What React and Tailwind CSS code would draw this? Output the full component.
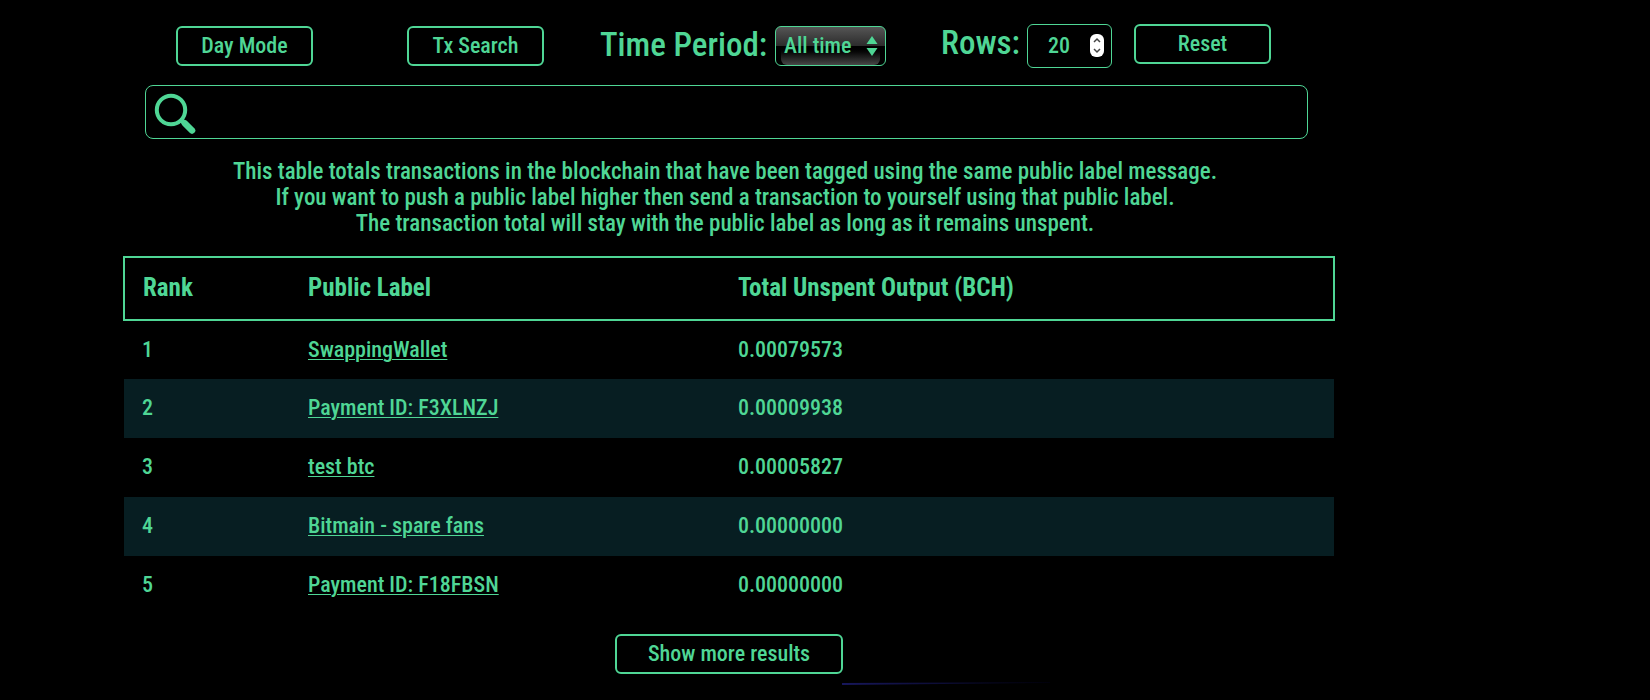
import React, { useState } from 'react';

const labels = [
  { rank: 1, label: 'SwappingWallet', total: '0.00079573' },
  { rank: 2, label: 'Payment ID: F3XLNZJ', total: '0.00009938' },
  { rank: 3, label: 'test btc', total: '0.00005827' },
  { rank: 4, label: 'Bitmain - spare fans', total: '0.00000000' },
  { rank: 5, label: 'Payment ID: F18FBSN', total: '0.00000000' }
];

const buttonClass =
  'h-10 shrink-0 pb-px border-2 border-[#4fd695] rounded-md bg-black leading-6 hover:bg-[#082024] cursor-pointer';

const SearchIcon = () => (
  <svg className="w-11 h-11" viewBox="0 0 44 44" fill="none" stroke="#4fd695" aria-hidden="true">
    <circle cx="17" cy="20" r="14.2" strokeWidth="4" />
    <path d="M26 29l5 4.500" strokeWidth="5" />
    <path d="M31 33.500l7 7" strokeWidth="6.500" strokeLinecap="round" />
  </svg>
);

const App = () => {
  const [rows, setRows] = useState(20);
  const [period, setPeriod] = useState('all');
  const [search, setSearch] = useState('');

  const handleReset = () => {
    setRows(20);
    setPeriod('all');
    setSearch('');
  };

  return (
    <div className="min-h-screen bg-black text-[#4fd695] text-[22px] font-medium font-['Roboto_Condensed','Roboto',sans-serif] pr-48 overflow-hidden">
      <main className="w-full max-w-[1212px] mx-auto pt-6">
        {/* Toolbar */}
        <div className="flex items-start pl-[53px] h-[61px]">
          <button className={`${buttonClass} w-[137px] mt-0.5 mr-[94px]`}>Day Mode</button>
          <button className={`${buttonClass} w-[137px] mt-0.5 mr-14`}>Tx Search</button>

          <label htmlFor="period" className="w-[175px] shrink-0 text-[33px] leading-[42px] whitespace-nowrap">
            Time Period:
          </label>
          <div className="relative w-[111px] shrink-0 mt-0.5 mr-[55px]">
            <div className="absolute inset-x-1.5 top-5 bottom-px rounded-b-md bg-linear-to-b from-black via-[#181818] to-[#484848]" />
            <select
              id="period"
              className="relative block w-full h-10 pl-2 pb-px appearance-none border border-[#4fd695] rounded-md bg-linear-to-b from-[#555] from-0% via-[#2c2c2c] via-50% to-transparent to-50% leading-6"
              value={period}
              onChange={(e) => setPeriod(e.target.value)}
            >
              <option value="all">All time</option>
              <option value="day">1 day</option>
              <option value="week">1 week</option>
            </select>
            <svg className="absolute right-2 top-2.5 w-3 h-5 pointer-events-none" viewBox="0 0 12 20" fill="#4fd695">
              <path d="M6 0l5.500 8H.5zM6 20l5.500-8H.5z" />
            </svg>
          </div>

          <label htmlFor="rows" className="w-[86px] shrink-0 text-[33px] leading-[38px]">
            Rows:
          </label>
          <div className="relative w-[85px] shrink-0 mr-[22px]">
            <input
              id="rows"
              type="number"
              className="block w-full h-11 pl-5 pb-0.5 border border-[#4fd695] rounded-md bg-black [appearance:textfield]"
              value={rows}
              onChange={(e) => setRows(e.target.value)}
            />
            <svg className="absolute right-2 top-2.5 w-[14px] h-[23px] pointer-events-none" viewBox="0 0 14 23" fill="none">
              <rect width="14" height="23" rx="6" fill="#fff" />
              <path d="M4 8l3-3 3 3M4 15l3 3 3-3" stroke="#444" strokeWidth="1.500" />
            </svg>
          </div>
          <button className={`${buttonClass} w-[137px]`} onClick={handleReset}>
            Reset
          </button>
        </div>

        {/* Search */}
        <div className="flex items-center h-[54px] ml-[22px] mr-[27px] pl-2 border border-[#4fd695] rounded-lg">
          <SearchIcon />
          <input
            type="search"
            aria-label="Search public labels"
            className="flex-1 h-full px-2 bg-transparent outline-none"
            value={search}
            onChange={(e) => setSearch(e.target.value)}
          />
        </div>

        <p className="mt-5 pr-2 text-center text-[23px] leading-[26px]">
          This table totals transactions in the blockchain that have been tagged using the same public label message.
          <br />
          If you want to push a public label higher then send a transaction to yourself using that public label.
          <br />
          The transaction total will stay with the public label as long as it remains unspent.
        </p>

        {/* Ranking */}
        <table className="w-full mt-[19px] border-collapse table-fixed text-left">
          <thead>
            <tr className="h-[63px] border-2 border-[#4fd695] text-[25px]">
              <th className="w-[166px] pl-4.5 pb-0.5 font-bold">Rank</th>
              <th className="w-[430px] pl-4.5 pb-0.5 font-bold">Public Label</th>
              <th className="pl-4.5 pb-0.5 font-bold">Total Unspent Output (BCH)</th>
            </tr>
          </thead>
          <tbody>
            {labels.map((item) => (
              <tr key={item.rank} className="h-[59px] even:bg-[#071e22]">
                <td className="pl-4.5 pb-0.5">{item.rank}</td>
                <td className="pl-4.5 pb-0.5">
                  <a href="#" className="underline decoration-1 underline-offset-2">{item.label}</a>
                </td>
                <td className="pl-4.5 pb-0.5">{item.total}</td>
              </tr>
            ))}
          </tbody>
        </table>

        <div className="flex justify-center mt-[19px]">
          <button className={`${buttonClass} w-[228px]`}>Show more results</button>
        </div>
        <svg className="block w-52 h-1 mt-2 ml-[719px]" viewBox="0 0 208 4" aria-hidden="true">
          <defs>
            <linearGradient id="streak">
              <stop offset="0" stopColor="#17175c" />
              <stop offset="1" stopColor="#00000a" />
            </linearGradient>
          </defs>
          <path d="M0 1L208 0v1L0 3z" fill="url(#streak)" />
        </svg>
      </main>
    </div>
  );
};

export default App;
